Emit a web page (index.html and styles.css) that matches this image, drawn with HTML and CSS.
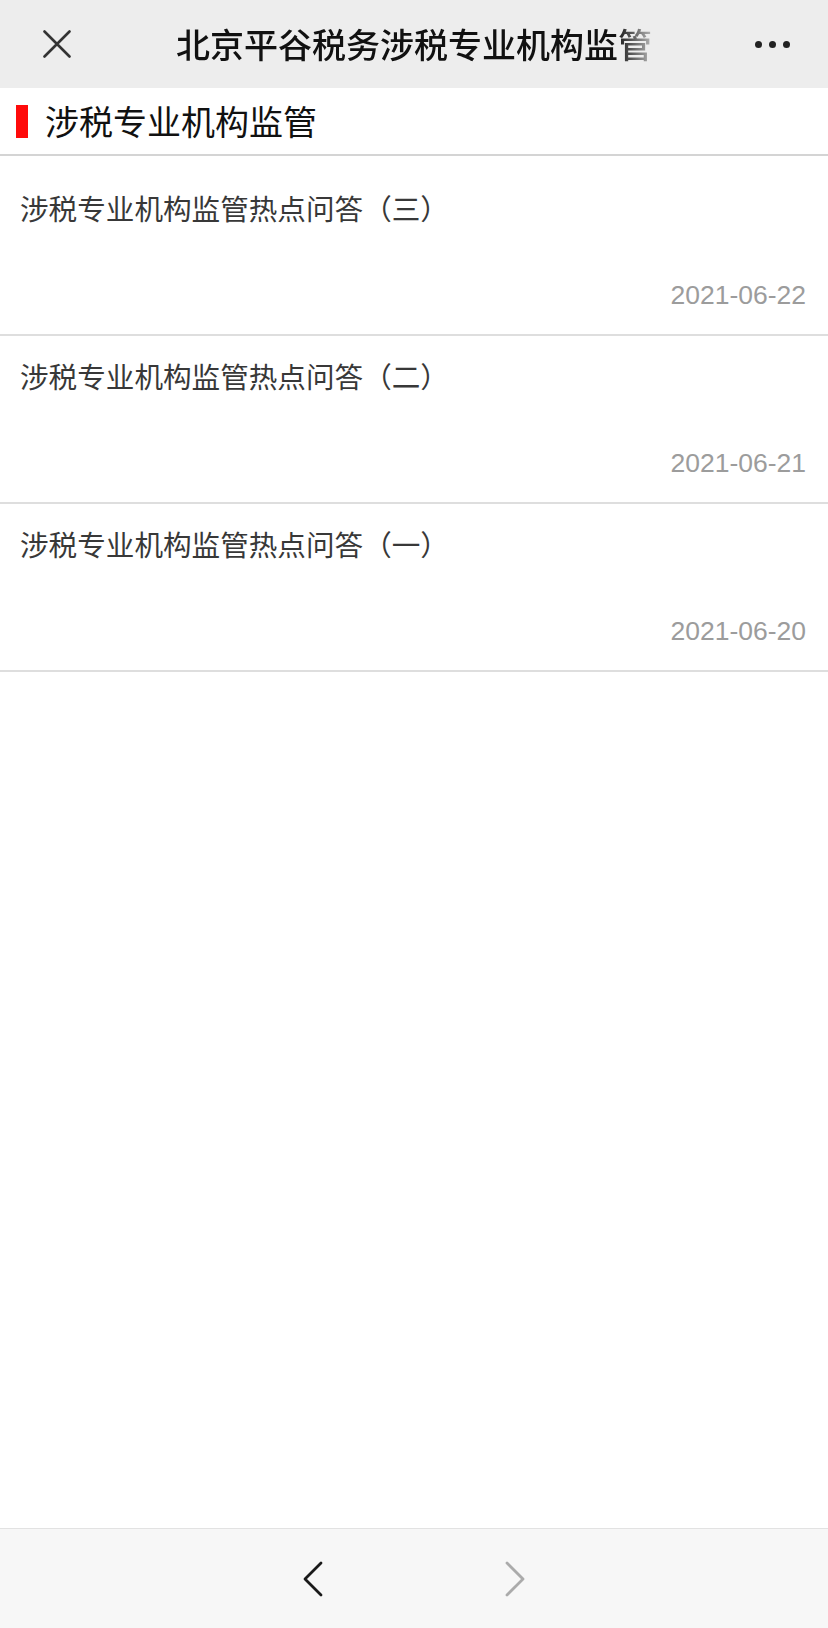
FILE: index.html
```html
<!DOCTYPE html>
<html lang="zh-CN">
<head>
    <meta charset="UTF-8">
    <meta name="viewport" content="width=device-width, initial-scale=1.0">
    <title>北京平谷税务涉税专业机构监管</title>
    <link rel="stylesheet" href="styles.css">
</head>
<body>
    <div class="page">
        <header class="topbar">
            <button class="close" aria-label="关闭">
                <svg width="28" height="28" viewBox="0 0 28 28">
                    <path d="M1.5 1.5 L26.5 26.5 M26.5 1.5 L1.5 26.5" stroke="#333" stroke-width="2.6" stroke-linecap="round" fill="none"/>
                </svg>
            </button>
            <h1 class="title">北京平谷税务涉税专业机构监管</h1>
            <div class="more"><span></span><span></span><span></span></div>
        </header>

        <div class="section-head">
            <span class="mark"></span>
            <h2>涉税专业机构监管</h2>
        </div>

        <main class="content">
            <ul class="list">
                <li class="item">
                    <a class="item-title" href="#">涉税专业机构监管热点问答（三）</a>
                    <span class="item-date">2021-06-22</span>
                </li>
                <li class="item">
                    <a class="item-title" href="#">涉税专业机构监管热点问答（二）</a>
                    <span class="item-date">2021-06-21</span>
                </li>
                <li class="item">
                    <a class="item-title" href="#">涉税专业机构监管热点问答（一）</a>
                    <span class="item-date">2021-06-20</span>
                </li>
            </ul>
        </main>

        <nav class="toolbar">
            <button class="nav-btn" aria-label="后退">
                <svg width="20" height="36" viewBox="0 0 20 36">
                    <polyline points="18,2 2,18 18,34" stroke="#1a1a1a" stroke-width="2.8" stroke-linecap="round" stroke-linejoin="round" fill="none"/>
                </svg>
            </button>
            <button class="nav-btn" aria-label="前进">
                <svg width="20" height="36" viewBox="0 0 20 36">
                    <polyline points="2,2 18,18 2,34" stroke="#ababab" stroke-width="2.8" stroke-linecap="round" stroke-linejoin="round" fill="none"/>
                </svg>
            </button>
        </nav>
    </div>
</body>
</html>
```

FILE: styles.css
```css
body {
    margin: 0;
    font-family: "Noto Sans CJK SC", "Noto Sans", sans-serif;
    background: #fff;
}
button {
    border: none;
    background: none;
    padding: 0;
    cursor: pointer;
}
.page {
    display: flex;
    flex-direction: column;
    height: 100vh;
}
.topbar {
    display: grid;
    grid-template-columns: 1fr auto 1fr;
    align-items: center;
    height: 88px;
    background: #ededed;
}
.close {
    justify-self: start;
    display: flex;
    margin-left: 43px;
}
.title {
    margin: 0;
    font-size: 34px;
    font-weight: 500;
    line-height: 44px;
    color: #111;
    white-space: nowrap;
    -webkit-mask-image: linear-gradient(to right, #000 calc(100% - 36px), rgba(0, 0, 0, 0.25));
    mask-image: linear-gradient(to right, #000 calc(100% - 36px), rgba(0, 0, 0, 0.25));
}
.more {
    justify-self: end;
    display: flex;
    gap: 7px;
    margin-right: 38px;
}
.more span {
    width: 7px;
    height: 7px;
    border-radius: 50%;
    background: #222;
}
.section-head {
    display: flex;
    align-items: center;
    height: 66px;
    padding-left: 16px;
    border-bottom: 2px solid #d4d4d4;
}
.mark {
    width: 12px;
    height: 33px;
    background: #ff0a0a;
    margin-right: 17px;
}
.section-head h2 {
    margin: 0;
    font-size: 34px;
    font-weight: normal;
    line-height: 1;
    color: #111;
}
.content {
    flex: 1;
}
.list {
    list-style: none;
    margin: 0;
    padding: 12px 0 0;
}
.item {
    display: flex;
    flex-direction: column;
    padding: 20px 22px 21px 20px;
    border-bottom: 2px solid #dedede;
}
.item-title {
    font-size: 28.6px;
    line-height: 40px;
    color: #383838;
    text-decoration: none;
}
.item-date {
    margin-top: 49px;
    font-family: "Liberation Sans", Arial, sans-serif;
    font-size: 26.5px;
    line-height: 36px;
    color: #9c9c9c;
    text-align: right;
}
.toolbar {
    display: flex;
    justify-content: center;
    align-items: center;
    gap: 142px;
    height: 99px;
    background: #f7f7f7;
    border-top: 1px solid #e2e2e2;
}
.nav-btn {
    display: flex;
    justify-content: center;
    width: 60px;
}
```
